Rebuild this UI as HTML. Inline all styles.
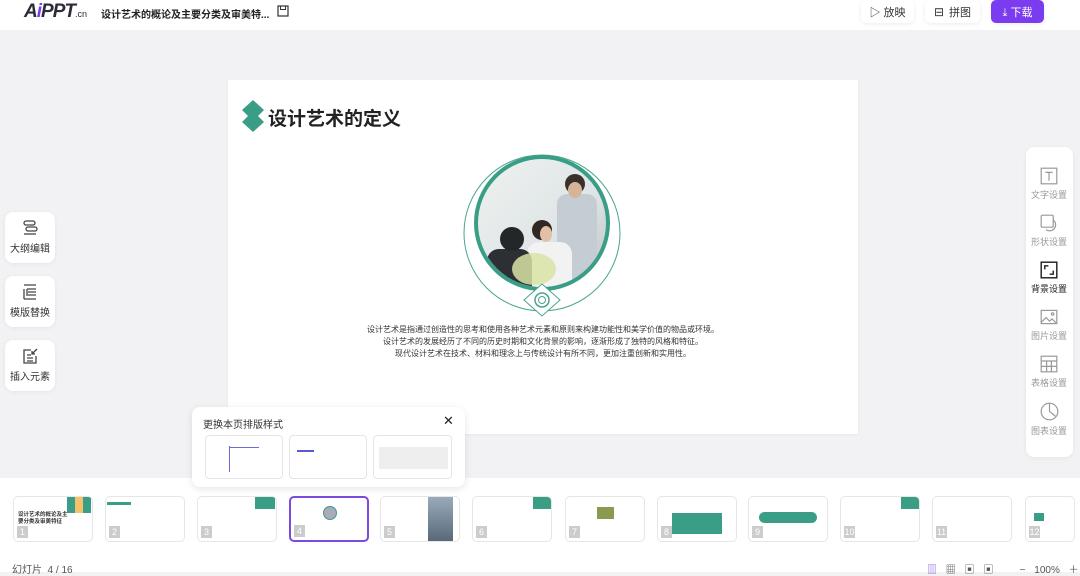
<!DOCTYPE html>
<html><head><meta charset="utf-8"><style>
*{margin:0;padding:0;box-sizing:border-box}
body{width:1080px;height:572px;overflow:hidden;background:#f2f2f4;font-family:"Liberation Sans","Noto Sans CJK SC",sans-serif;position:relative;color:#333}
.top{position:absolute;left:0;top:0;width:1080px;height:30px;background:#fff}
.abs{position:absolute}
.btn{position:absolute;top:0;height:23px;background:#fff;border-radius:5px;box-shadow:0 1px 4px rgba(0,0,0,.08);font-size:11px;display:flex;align-items:center;justify-content:center;gap:5px}
.card{position:absolute;background:#fff;border-radius:8px;box-shadow:0 1px 4px rgba(0,0,0,.06)}
.lt{left:5px;width:50px;height:51px;font-size:10px;text-align:center;color:#333}
.rt-item{position:absolute;left:0;width:52px;text-align:center;font-size:9px;color:#999}
.rt-item svg{display:block;margin:0 auto 3px}
.thumb{position:absolute;top:496px;width:80px;height:46px;background:#fff;border:1px solid #e6e6e6;border-radius:5px;overflow:hidden}
.num{position:absolute;left:3px;bottom:3px;width:11px;height:12px;background:#ccc;color:#fff;font-size:9px;text-align:center;line-height:12px}
</style></head><body>
<div class="top"></div>
<div class="abs" style="left:24px;top:2px;font-size:19px;font-weight:bold;font-style:italic;color:#2b2b3a;letter-spacing:-1px;line-height:20px">A<span style="color:#7a3df0">i</span>PPT<span style="font-size:9px;font-style:normal;font-weight:normal;letter-spacing:0">.cn</span></div>
<div class="abs" style="left:101px;top:6px;font-size:10px;font-weight:bold;color:#222;white-space:nowrap">设计艺术的概论及主要分类及审美特...</div>
<svg class="abs" style="left:277px;top:5px" width="12" height="12" viewBox="0 0 12 12"><rect x="1" y="1" width="10" height="10" fill="none" stroke="#333" stroke-width="1.2"/><rect x="3.5" y="1" width="5" height="3.5" fill="none" stroke="#333"/></svg>
<div class="btn" style="left:861px;width:53px">▷ 放映</div>
<div class="btn" style="left:925px;width:55px"><span style="font-size:12px">⊟</span> 拼图</div>
<div class="btn" style="left:991px;width:53px;background:#7b3cf0;color:#fff">⤓ 下载</div>

<!-- slide -->
<div class="abs" style="left:228px;top:80px;width:630px;height:354px;background:#fff;box-shadow:0 1px 3px rgba(0,0,0,.05)">
<svg class="abs" style="left:13px;top:20px" width="24" height="32" viewBox="0 0 24 32"><path d="M12 0 L23 10 L17 16 L23 22 L12 32 L1 22 L7 16 L1 10Z" fill="#3a9e86"/></svg>
<div class="abs" style="left:40px;top:24px;font-size:19px;font-weight:bold;color:#222">设计艺术的定义</div>
<svg class="abs" style="left:234px;top:74px" width="160" height="166" viewBox="0 0 160 166">
<defs><linearGradient id="g" x1="0" y1="0" x2="1" y2="1"><stop offset="0" stop-color="#eef3f0"/><stop offset=".6" stop-color="#dfe4e6"/><stop offset="1" stop-color="#b9c0c3"/></linearGradient><clipPath id="c"><circle cx="80" cy="69" r="64"/></clipPath></defs>
<circle cx="80" cy="79" r="78" fill="none" stroke="#4aa58e" stroke-width="1"/>
<circle cx="80" cy="69" r="66" fill="url(#g)" stroke="#3a9e86" stroke-width="4"/>
<g clip-path="url(#c)">
<rect x="95" y="40" width="40" height="90" rx="10" fill="#c5ccd4"/>
<circle cx="113" cy="30" r="10" fill="#3a302a"/><ellipse cx="113" cy="36" rx="7" ry="8" fill="#d6b49a"/>
<rect x="65" y="88" width="45" height="50" rx="12" fill="#f2f2f2"/>
<circle cx="80" cy="76" r="10" fill="#2f2824"/><ellipse cx="84" cy="80" rx="6" ry="8" fill="#e2c0a6"/>
<rect x="25" y="95" width="45" height="50" rx="12" fill="#2c3034"/>
<circle cx="50" cy="85" r="12" fill="#23272a"/>
<ellipse cx="72" cy="115" rx="22" ry="16" fill="#d9e3a6" opacity=".85"/>
</g>
<path d="M80 130 L98 146 L80 162 L62 146Z" fill="#fff" stroke="#4aa58e"/>
<circle cx="80" cy="146" r="7" fill="none" stroke="#4aa58e" stroke-width="1.5"/><circle cx="80" cy="146" r="3.5" fill="none" stroke="#4aa58e"/>
</svg>
<div class="abs" style="left:0;top:244px;width:630px;text-align:center;font-size:8px;line-height:12px;color:#333">设计艺术是指通过创造性的思考和使用各种艺术元素和原则来构建功能性和美学价值的物品或环境。<br>设计艺术的发展经历了不同的历史时期和文化背景的影响，逐渐形成了独特的风格和特征。<br>现代设计艺术在技术、材料和理念上与传统设计有所不同，更加注重创新和实用性。</div>
</div>

<!-- left tools -->
<div class="card lt" style="top:212px"><svg style="margin-top:7px" width="18" height="18" viewBox="0 0 18 18" fill="none" stroke="#444" stroke-width="1.3"><rect x="3" y="2" width="11" height="4" rx="2"/><rect x="5" y="8" width="11" height="4" rx="2"/><path d="M3 15h12"/></svg><div>大纲编辑</div></div>
<div class="card lt" style="top:276px"><svg style="margin-top:7px" width="18" height="18" viewBox="0 0 18 18" fill="none" stroke="#444" stroke-width="1.3"><path d="M3 2h12M3 16h12M3 6v10M6 6h9M7 9h8M7 12h8M6 6v7"/></svg><div>模版替换</div></div>
<div class="card lt" style="top:340px"><svg style="margin-top:7px" width="18" height="18" viewBox="0 0 18 18" fill="none" stroke="#444" stroke-width="1.3"><path d="M10 3H3v13h12V9M6 8h4M6 11h6M6 14h6M16 2l-5 5M11 4v3h3"/></svg><div>插入元素</div></div>

<!-- right panel -->
<div class="card" style="left:1026px;top:147px;width:47px;height:310px">
<div class="rt-item" style="top:20px;left:-3px"><svg width="18" height="18" viewBox="0 0 15 15" fill="none" stroke="#999"><rect x="1" y="1" width="13" height="13"/><path d="M4.5 4.5h6M7.5 4.5v7"/></svg><div>文字设置</div></div>
<div class="rt-item" style="top:67px;left:-3px"><svg width="18" height="18" viewBox="0 0 15 15" fill="none" stroke="#999"><rect x="1" y="1" width="10" height="10" rx="1"/><path d="M11 5a5 5 0 0 1-6 8"/></svg><div>形状设置</div></div>
<div class="rt-item" style="top:114px;left:-3px;color:#222"><svg width="18" height="18" viewBox="0 0 15 15" fill="none" stroke="#222" stroke-width="1.2"><rect x="1" y="1" width="13" height="13"/><path d="M4 7V4h3M11 8v3H8"/></svg><div>背景设置</div></div>
<div class="rt-item" style="top:161px;left:-3px"><svg width="18" height="18" viewBox="0 0 15 15" fill="none" stroke="#999"><rect x="1" y="2" width="13" height="11"/><path d="M1 12l4-4 3 3 2-2 4 4"/><circle cx="10.5" cy="5" r="1"/></svg><div>图片设置</div></div>
<div class="rt-item" style="top:208px;left:-3px"><svg width="18" height="18" viewBox="0 0 15 15" fill="none" stroke="#999"><rect x="1" y="1" width="13" height="13"/><path d="M1 5h13M1 9.5h13M5.5 5v9M9.5 5v9"/></svg><div>表格设置</div></div>
<div class="rt-item" style="top:255px;left:-3px"><svg width="19" height="19" viewBox="0 0 16 16" fill="none" stroke="#999"><circle cx="8" cy="8" r="7"/><path d="M8 1v7l5 4"/></svg><div>图表设置</div></div>
</div>

<!-- bottom band -->
<div class="abs" style="left:0;top:478px;width:1080px;height:94px;background:#fff"></div>
<div class="thumb" style="left:13px"><div class="abs" style="left:4px;top:15px;font-size:5.5px;font-weight:bold;line-height:7px">设计艺术的概论及主<br>要分类及审美特征</div><div class="abs" style="left:53px;top:0;width:24px;height:16px;background:linear-gradient(90deg,#3a9e86 33%,#f5c26b 33% 66%,#3a9e86 66%)"></div><div class="num">1</div></div>
<div class="thumb" style="left:105px"><div class="abs" style="left:1px;top:5px;width:24px;height:3px;background:#3a9e86"></div><div class="num">2</div></div>
<div class="thumb" style="left:197px"><div class="abs" style="left:57px;top:0;width:20px;height:12px;background:#3a9e86"></div><div class="num">3</div></div>
<div class="thumb" style="left:289px;border:2px solid #7b4ae0"><div class="abs" style="left:32px;top:8px;width:14px;height:14px;border-radius:50%;background:#aab;border:1px solid #3a9e86"></div><div class="num">4</div></div>
<div class="thumb" style="left:380px"><div class="abs" style="left:47px;top:0;width:25px;height:46px;background:linear-gradient(#9ab,#567)"></div><div class="num">5</div></div>
<div class="thumb" style="left:472px"><div class="abs" style="left:60px;top:0;width:18px;height:12px;background:#3a9e86"></div><div class="num">6</div></div>
<div class="thumb" style="left:565px"><div class="abs" style="left:31px;top:10px;width:17px;height:12px;background:#8a9a50"></div><div class="num">7</div></div>
<div class="thumb" style="left:657px"><div class="abs" style="left:14px;top:16px;width:50px;height:21px;background:#3a9e86"></div><div class="num">8</div></div>
<div class="thumb" style="left:748px"><div class="abs" style="left:10px;top:15px;width:58px;height:11px;border-radius:6px;background:#3a9e86"></div><div class="num">9</div></div>
<div class="thumb" style="left:840px"><div class="abs" style="left:60px;top:0;width:18px;height:12px;background:#3a9e86"></div><div class="num">10</div></div>
<div class="thumb" style="left:932px"><div class="num">11</div></div>
<div class="thumb" style="left:1025px;width:50px"><div class="abs" style="left:8px;top:16px;width:10px;height:8px;background:#3a9e86"></div><div class="num">12</div></div>
<div class="abs" style="left:12px;top:561px;font-size:10px;color:#555">幻灯片 &nbsp;4 / 16</div>
<div class="abs" style="left:927px;top:561px;font-size:10px;color:#555;word-spacing:6px"><span style="color:#7b4ae0">▥</span> ▦ ▣ ▣ &nbsp; − 100% ＋</div>

<!-- popup -->
<div class="card" style="left:192px;top:407px;width:273px;height:80px;box-shadow:0 2px 8px rgba(0,0,0,.1)">
<div class="abs" style="left:11px;top:9px;font-size:10px;color:#333">更换本页排版样式</div>
<div class="abs" style="left:251px;top:6px;font-size:13px;color:#222">✕</div>
<div class="abs" style="left:13px;top:28px;width:78px;height:44px;border:1px solid #e5e5e5;border-radius:4px"><div class="abs" style="left:23px;top:10px;width:1px;height:26px;background:#6a6ad8"></div><div class="abs" style="left:23px;top:11px;width:30px;height:1px;background:#6a6ad8"></div></div>
<div class="abs" style="left:97px;top:28px;width:78px;height:44px;border:1px solid #e5e5e5;border-radius:4px"><div class="abs" style="left:7px;top:14px;width:17px;height:2px;background:#5a5ad0"></div></div>
<div class="abs" style="left:181px;top:28px;width:79px;height:44px;border:1px solid #e5e5e5;border-radius:4px"><div class="abs" style="left:5px;top:11px;width:69px;height:22px;background:#eee"></div></div>
</div>
</body></html>
